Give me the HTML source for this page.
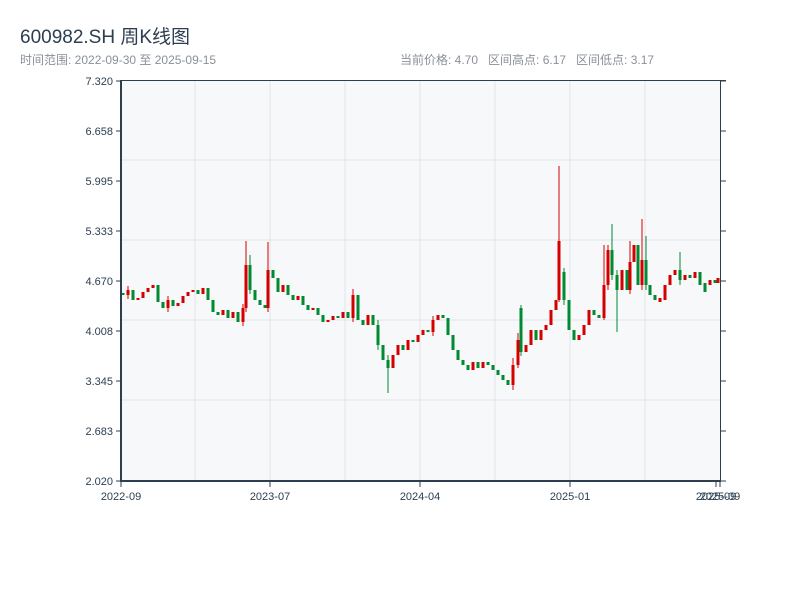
<!DOCTYPE html>
<html><head><meta charset="utf-8"><style>
body{margin:0;width:800px;height:600px;background:#fff;overflow:hidden;font-family:"Liberation Sans","Noto Sans CJK SC",sans-serif;}
.t{position:absolute;left:20px;top:22px;font-size:19px;color:#2c3e50}
.s{position:absolute;top:51px;font-size:12px;color:#8a9099}
</style></head><body>
<div class="t">600982.SH 周K线图</div>
<div class="s" style="left:20px">时间范围: 2022-09-30 至 2025-09-15</div>
<div class="s" style="left:400px">当前价格: 4.70&nbsp;&nbsp;&nbsp;区间高点: 6.17&nbsp;&nbsp;&nbsp;区间低点: 3.17</div>
<svg width="800" height="600" style="position:absolute;left:0;top:0" font-family="Liberation Sans, sans-serif" font-size="11" fill="#2c3e50">
<rect x="121" y="80" width="599" height="401" fill="#f7f8fa"/>
<path d="M121 160H720M121 240H720M121 320H720M121 400H720M195 80V481M270 80V481M345 80V481M420 80V481M495 80V481M570 80V481M645 80V481" stroke="#e3e5ea" fill="none"/>
<path stroke="#d40000" stroke-width="3" fill="none" d="M128 290V295M138 298V300M143 292V298M148 288V292M153 285V288M168 300V308M178 303V306M183 296V303M188 292V296M193 290V292M203 288V294M223 310V315M233 312V318M243 308V322M246 265V308M268 270V308M283 285V292M298 296V300M313 308V310M328 320V322M333 316V320M343 312V318M353 295V318M368 315V325M393 355V368M398 345V355M408 340V350M418 335V342M423 330V335M433 320V332M438 315V320M473 362V370M483 362V368M513 365V385M518 340V365M526 345V352M531 330V345M541 330V340M546 325V330M551 310V325M556 300V310M559 241V300M579 335V340M584 325V335M589 310V325M604 285V318M608 250V285M622 270V290M630 262V290M634 245V262M642 260V285M660 298V302M665 285V300M670 275V285M675 270V275M685 275V280M695 272V278M710 280V285M718 278V283"/>
<path stroke="#d40000" stroke-width="1" fill="none" d="M246 241V312M268 242V312M559 166V302M604 245V320M608 245V290M630 241V294M642 219V290M353 289V322M433 316V336M513 358V390M518 333V368M128 286V299M168 296V312M243 304V326"/>
<path stroke="#008a32" stroke-width="3" fill="none" d="M123 293V295M133 290V300M158 285V302M163 302V308M173 300V306M198 290V294M208 288V300M213 300V312M218 312V315M228 310V318M238 312V322M250 265V290M255 290V300M260 300V305M265 305V308M273 270V278M278 278V292M288 285V295M293 295V300M303 296V305M308 305V310M318 308V315M323 315V322M338 316V318M348 312V318M358 295V320M363 320V325M373 315V325M378 325V345M383 345V360M388 360V368M403 345V350M413 340V342M428 330V332M443 315V318M448 318V335M453 335V350M458 350V360M463 360V365M468 365V370M478 362V368M488 362V365M493 365V370M498 370V375M503 375V380M508 380V385M521 308V352M536 330V340M564 272V300M569 300V330M574 330V340M594 310V315M599 315V318M612 250V275M617 275V290M627 270V290M638 245V285M646 260V285M650 285V295M655 295V300M680 270V280M690 275V278M700 272V285M705 283V292M715 280V283"/>
<path stroke="#008a32" stroke-width="1" fill="none" d="M388 355V393M612 224V280M617 270V332M646 236V290M680 252V285M564 268V305M250 255V294M521 305V356M378 320V350"/>
<path d="M120 80.5H726M720.5 80V482" stroke="#2c3e50" fill="none"/>
<path d="M121 80V482M120 481H721" stroke="#2c3e50" stroke-width="2" fill="none"/>
<path d="M116 81H121M116 131H121M116 181H121M116 231H121M116 281H121M116 331H121M116 381H121M116 431H121M116 481H121M720 81H726M720 131H726M720 181H726M720 231H726M720 281H726M720 331H726M720 381H726M720 431H726M720 481H726M121 481V487M270 481V487M420 481V487M570 481V487M716 481V487M720 481V487" stroke="#2c3e50" fill="none"/>
<g text-anchor="end">
<text x="113" y="85">7.320</text><text x="113" y="135">6.658</text><text x="113" y="185">5.995</text><text x="113" y="235">5.333</text><text x="113" y="285">4.670</text><text x="113" y="335">4.008</text><text x="113" y="385">3.345</text><text x="113" y="435">2.683</text><text x="113" y="485">2.020</text>
</g>
<g text-anchor="middle">
<text x="121" y="500">2022-09</text><text x="270" y="500">2023-07</text><text x="420" y="500">2024-04</text><text x="570" y="500">2025-01</text><text x="716" y="500">2025-09</text><text x="720" y="500">2025-09</text>
</g>
</svg>
</body></html>
